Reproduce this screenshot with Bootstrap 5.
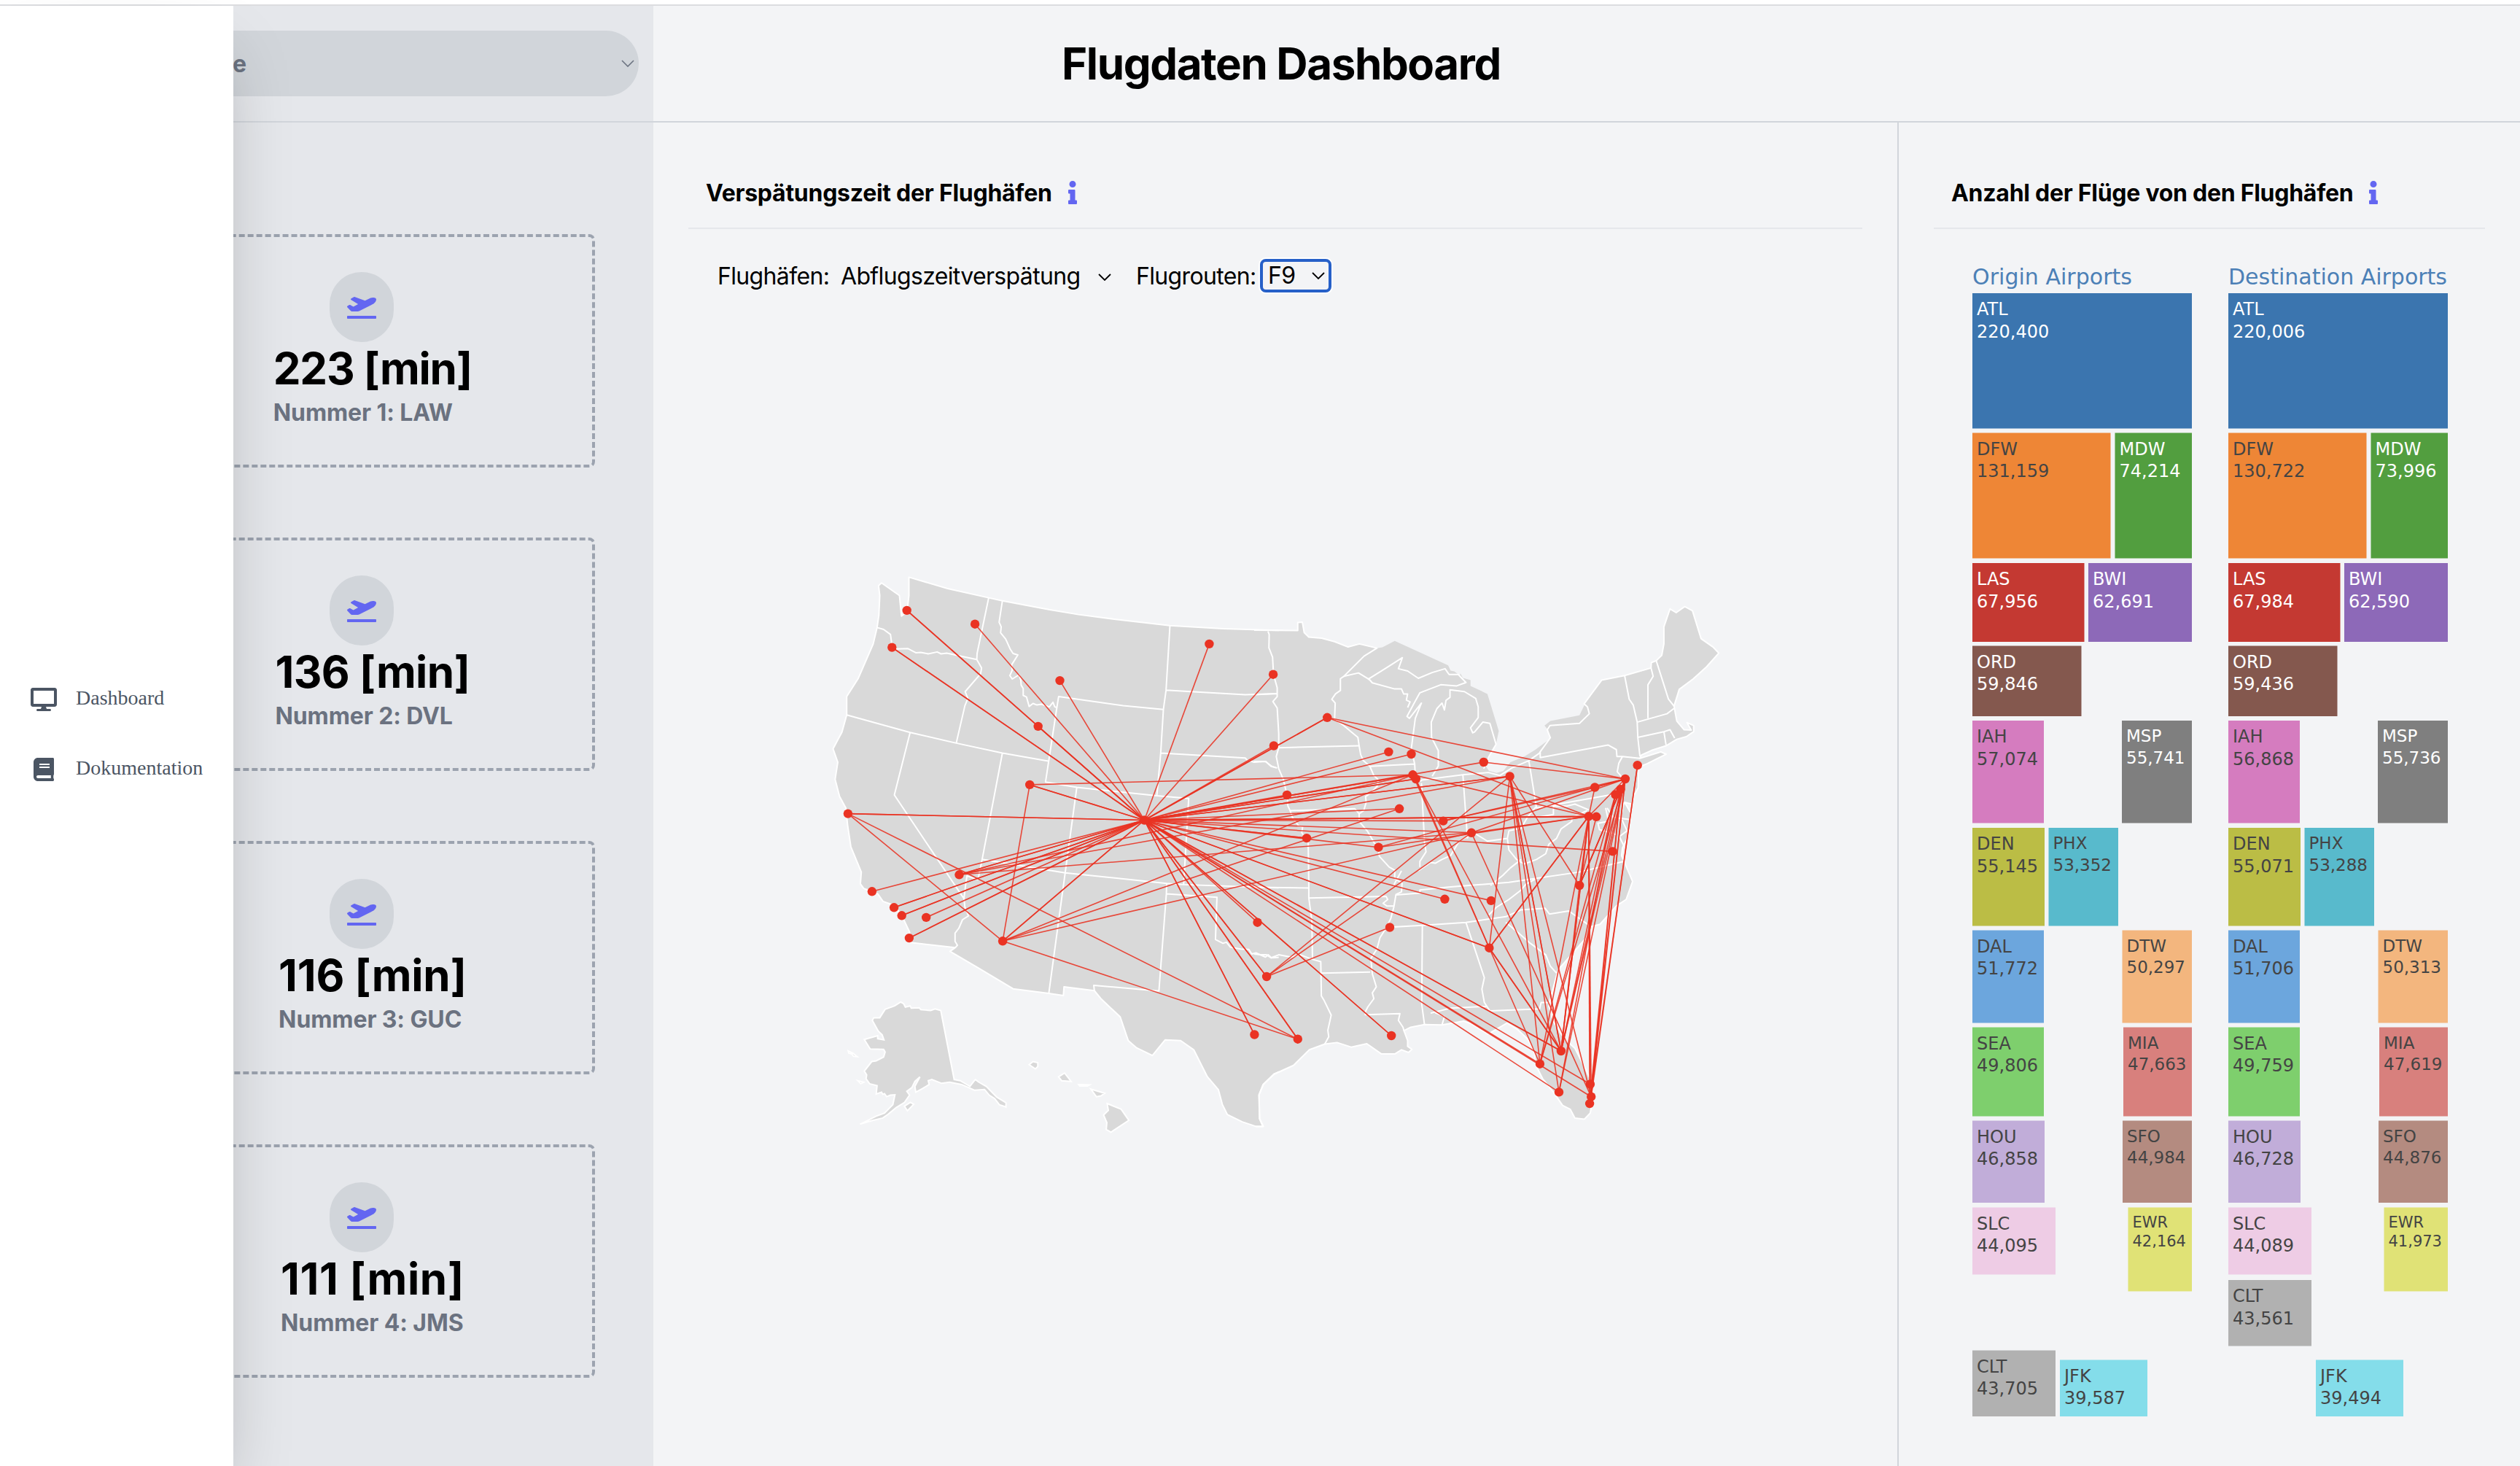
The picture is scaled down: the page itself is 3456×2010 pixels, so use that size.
<!DOCTYPE html>
<html lang="de">
<head>
<meta charset="utf-8">
<title>Flugdaten Dashboard</title>
<link href="https://cdn.jsdelivr.net/npm/bootstrap@5.3.0/dist/css/bootstrap.min.css" rel="stylesheet">
<style>
body{font-family:Inter,"Liberation Sans",sans-serif;font-size:32px;line-height:40px;color:#000;background:#fff;height:2010px;overflow:hidden}
.topline{height:8px;border-bottom:2px solid #dcdde0;flex:none}
.shell{background:#f3f4f6;height:2002px}
.side{width:896px;flex:none;background:#e5e7eb}
.bar{height:160px;border-bottom:2px solid #d1d5db;flex:none}
.pill{height:90px;width:800px;margin-right:20px;border-radius:45px;background:#d1d5da;color:#6b7280;padding:0 6px 0 243px}
.pill span{padding-top:2px}
.cards{gap:96px;padding:153px 0 0 176px}
.kpi{width:640px;height:320px;border:4px dashed #9ca3af;border-radius:8px;padding-top:48px;flex:none}
.disc{width:88px;height:96px;border-radius:44px;background:#d1d5da;color:#6366f1;flex:none}
.disc svg{margin-top:-1px}
.kpitext{margin-left:30px}
.big{font-size:60px;line-height:72px;letter-spacing:-1.2px}
.kpi:nth-child(2) .big{letter-spacing:-.6px}
.kpi:nth-child(3) .big{letter-spacing:-.2px}
.kpi:nth-child(4) .big{letter-spacing:.6px}
.sub{color:#6b7280;letter-spacing:-.1px;margin-top:5px}
.drawer{position:absolute;left:0;top:8px;width:320px;height:2002px;background:#fff;box-shadow:0 50px 100px -24px rgba(0,0,0,.27);font-family:"Liberation Serif",serif;font-size:28px;line-height:28px;color:#4b5563;padding:935px 0 0 42px;gap:64px}
.drawer .ico{width:36px;margin-right:26px}
.pagetitle{font-size:60px;line-height:72px;padding-left:560px;letter-spacing:-1.38px}
.mapcol{width:1708px;flex:none;padding:0 48px;border-right:2px solid #d1d5db}
.treecol{padding:0 48px}
.sect{height:146px;border-bottom:2px solid #e5e7eb;padding:76px 0 0 24px}
.sect svg{color:#6366f1;margin-left:22px}
.sect span{letter-spacing:-.27px;padding-top:1px}
.filters{height:106px;padding:45px 0 0 40px}
.filters span{white-space:nowrap;letter-spacing:-.65px}
.focused{width:98px;height:46px;border:4px solid #2660c8;border-radius:8px;box-shadow:0 0 0 2px #fff;padding:0 5px 0 7px}
.chart text{font-family:"DejaVu Sans",sans-serif}
</style>
</head>
<body class="d-flex flex-column">
<div class="topline"></div>
<div class="shell d-flex">
  <aside class="side d-flex flex-column">
    <div class="bar d-flex align-items-center justify-content-end">
      <div class="pill d-flex align-items-center justify-content-between fw-bold"><span>e</span>
        <svg width="18" height="10" fill="none" stroke="currentColor" stroke-width="1.6"><path d="M1 1l8 8 8-8"/></svg></div>
    </div>
    <div class="cards d-flex flex-column" id="cards"></div>
  </aside>
  <div class="flex-grow-1 d-flex flex-column">
    <header class="bar d-flex align-items-center"><h1 class="pagetitle fw-bold m-0">Flugdaten Dashboard</h1></header>
    <div class="d-flex flex-grow-1">
      <section class="mapcol">
        <div class="sect d-flex align-items-start fw-bold"><span>Verspätungszeit der Flughäfen</span>
          <svg class="mt-1" width="12" height="32" viewBox="0 0 192 512" overflow="visible"><use href="#info"/></svg></div>
        <div class="filters d-flex align-items-start">
          <span style="width:169px">Flughäfen:</span><span style="width:353px">Abflugszeitverspätung</span>
          <svg class="mt-3" width="18" height="10" fill="none" stroke="#000" stroke-width="1.8"><path d="M1 1l8 8 8-8"/></svg>
          <span style="width:170px;margin-left:34px">Flugrouten:</span>
          <div class="focused d-flex align-items-center justify-content-between" style="margin-top:-4px"><span>F9</span>
          <svg width="18" height="10" fill="none" stroke="#000" stroke-width="1.8"><path d="M1 1l8 8 8-8"/></svg></div>
        </div>
        <svg id="map" class="d-block" width="1610" height="1590" viewBox="944 420 1610 1590">
          <!-- western half -->
          <g transform="translate(1120 760) scale(.40816 .52295)">
            <path class="land" fill="#d9d9d9" d="M310,60 310,108 304,150 285,162 278,108 218,75 208,82 212,108 209,160 203,192 190,235 140,325 101,373 101,421 85,466 55,510 71,545 62,590 77,635 98,665 104,710 115,767 150,833 147,864 158,876 186,884 205,890 223,910 260,920 285,945 312,990 316,1018 466,1031 448,1041 540,1083 660,1139 780,1151 829,1157 831,1134 933,1144 955,1165 1020,1213 1047,1275 1075,1294 1128,1314 1171,1273 1223,1275 1267,1299 1313,1370 1350,1404 1363,1442 1380,1469 1430,1488 1476,1500 1499,1500 1488,1480 1486,1417 1500,1390 1536,1363 1568,1352 1568,200 1366,195 1187,187 1000,170 880,158 780,145 624,122 578,114 440,90Z"/>
            <g fill="none" stroke="#fff" stroke-width="2" stroke-linejoin="round">
            <path vector-effect="non-scaling-stroke" d="M1568,200 1366,195 1187,187 1000,170 880,158 780,145 624,122 578,114 440,90 310,60 310,108 304,150 285,162 278,108 218,75 208,82 212,108 209,160 203,192 190,235 140,325 101,373 101,421 85,466 55,510 71,545 62,590 77,635 98,665 104,710 115,767 150,833 147,864 158,876 186,884 205,890 223,910 260,920 285,945 312,990 316,1018 466,1031 448,1041 540,1083 660,1139 780,1151 829,1157 831,1134 933,1144 955,1165 1020,1213 1047,1275 1075,1294 1128,1314 1171,1273 1223,1275 1267,1299 1313,1370 1350,1404 1363,1442 1380,1469 1430,1488 1476,1500 1499,1500 1488,1480 1486,1417 1500,1390 1536,1363 1568,1352"/>
            <path vector-effect="non-scaling-stroke" d="M203,192 225,197 248,210 254,244 270,248 306,247 333,258 350,257 375,261 405,256 418,261 437,259 538,276M578,114 539,260 538,276 554,298 551,313 499,360 508,378 498,397 469,495M101,421 314,467 469,495 624,521 778,542M624,122 613,178 620,190 618,206 635,222 650,248 660,260 676,264 655,290 657,304 649,318 657,327 680,316 686,330 687,343 694,352 694,370 705,374 714,399 727,391 740,395 755,393 782,400 794,388 800,400 807,402M1165,407 1030,397 813,373 807,402 769,597 874,611 1143,633 1250,640 1233,866M1156,521 1440,534 1447,540 1470,545 1507,543 1530,556 1545,560M1187,187 1174,356 1165,407 1156,521 1143,633M1174,356 1300,362 1440,368 1546,365M874,611 835,835 780,1151M556,800 835,835 1176,863 1233,866 1568,875M624,521 556,800 542,853 505,843 500,870 495,903 498,925 510,948 490,958 478,980 465,993 465,1015 473,1025 466,1031M314,467 261,631 495,903M1176,863 1175,890 1150,1145 931,1130 933,1144M1175,890 1345,899 1340,1010 1365,1020 1377,1017 1390,1030 1425,1035 1452,1036 1462,1048 1476,1045 1508,1056 1517,1050 1528,1058 1568,1056"/>
            </g>
            <!-- Alaska and Hawaii -->
            <path vector-effect="non-scaling-stroke" fill="#d9d9d9" stroke="#fff" stroke-width="2" d="M282,1174 292,1178 298,1187 314,1184 318,1190 345,1189 350,1194 383,1196 398,1192 417,1196 462,1377 482,1380 515,1395 533,1377 545,1384 570,1395 605,1423 636,1438 636,1449 614,1443 598,1427 580,1418 564,1403 530,1405 487,1390 447,1384 420,1387 387,1377 375,1380 378,1390 355,1401 333,1410 330,1395 347,1370 330,1382 320,1398 303,1408 312,1418 295,1437 268,1450 240,1468 222,1478 185,1485 146,1494 200,1473 228,1465 256,1443 263,1417 248,1418 235,1422 228,1414 222,1416 218,1410 200,1415 203,1393 178,1388 166,1375 168,1365 160,1355 185,1330 200,1328 225,1318 230,1305 225,1298 180,1297 160,1272 205,1262 205,1270 226,1273 220,1260 207,1250 187,1222 192,1215 212,1215 230,1193 262,1184ZM106,1302 108,1308 118,1310 124,1316 136,1317 122,1308ZM138,1380 158,1384 148,1388ZM295,1447 315,1437 326,1442 305,1459ZM714,1338 727,1330 743,1333 743,1343 735,1349ZM813,1370 833,1360 855,1382 823,1380ZM880,1390 917,1391 910,1394 884,1394ZM921,1402 968,1413 955,1420 940,1422ZM976,1440 1023,1455 1049,1484 989,1515 973,1508 975,1490 964,1470 980,1458Z"/>
          </g>
          <!-- eastern half -->
          <g transform="translate(1720 760) scale(.42091 .52295)">
            <path fill="#d9d9d9" d="M80,200 142,200 142,179 157,178 163,205 178,217 220,220 262,229 306,243 343,235 400,246 418,244 458,227 540,257 632,291 640,305 652,307 670,318 672,312 680,324 705,330 705,345 760,366 797,463 788,498 765,530 750,550 765,568 790,573 812,568 835,545 880,530 915,513 957,488 965,480 957,460 946,449 965,437 1060,422 1078,392 1132,330 1207,318 1293,298 1294,284 1310,279 1328,265 1335,235 1335,190 1355,143 1375,153 1403,137 1428,148 1456,221 1495,243 1514,259 1474,295 1430,327 1385,354 1368,398 1377,437 1401,460 1424,461 1410,441 1432,449 1432,465 1408,478 1377,485 1342,502 1295,514 1262,526 1257,535 1325,518 1342,524 1280,549 1252,558 1251,612 1239,630 1230,655 1207,650 1228,680 1218,740 1200,770 1197,790 1205,805 1233,858 1212,905 1180,922 1127,970 1097,976 1083,1004 990,1090 965,1165 960,1185 975,1225 1010,1270 1045,1295 1080,1350 1100,1385 1104,1425 1095,1465 1076,1481 1045,1478 1030,1455 1005,1445 975,1410 940,1375 918,1340 912,1300 890,1270 857,1245 824,1229 762,1258 705,1230 683,1224 612,1234 555,1233 510,1240 488,1249 500,1275 500,1290 514,1298 503,1306 480,1299 458,1310 415,1310 367,1283 316,1292 270,1280 230,1284 180,1299 128,1340 80,1358Z"/>
            <g fill="none" stroke="#fff" stroke-width="2" stroke-linejoin="round">
            <path vector-effect="non-scaling-stroke" d="M0,199 142,200 142,179 157,178 163,205 178,217 220,220 262,229 306,243 343,235 400,246 358,267 292,320 281,326 281,357 265,366 253,380 264,390 262,432 290,448 320,468 338,480 342,502 347,525 355,540 377,556 390,580 403,590 402,607 380,625 363,635 365,650 357,672 342,680 342,700 370,727 390,755 405,770 408,792 440,820 458,828 458,850 482,862 480,885 462,892 455,925 445,955 430,980 410,1005 400,1035 380,1060 385,1100 398,1134 385,1150 390,1165 370,1187 362,1200 362,1207 475,1204 470,1222 485,1240 488,1249"/>
            <path vector-effect="non-scaling-stroke" d="M930,520 965,481 955,460 964,449 1060,443 1092,418 1086,400 1075,392 1132,330 1207,318 1293,298 1294,284 1310,279 1328,265 1335,235 1335,190 1355,143 1375,153 1403,137 1428,148 1456,221 1495,243 1514,259 1474,295 1430,327 1385,354 1368,398 1377,437 1401,460 1424,461 1410,441 1432,449 1432,465 1408,478 1377,485 1342,502 1295,514 1262,526 1257,535 1325,518 1342,524 1280,549 1252,558 1251,612 1239,630 1230,655 1207,650 1228,680 1218,740 1200,770 1197,790 1205,805 1233,858 1212,905 1180,922 1127,970 1097,976 1083,1004 990,1090 965,1165 960,1185 975,1225 1010,1270 1045,1295 1080,1350 1100,1385 1104,1425 1095,1465 1076,1481 1045,1478 1030,1455 1005,1445 975,1410 940,1375 918,1340 912,1300 890,1270 857,1245 824,1229 762,1258 705,1230 683,1224 612,1234 555,1233 510,1240 488,1249 500,1275 500,1290 514,1298 503,1306 480,1299 458,1310 415,1310 367,1283 316,1292 270,1280 230,1284 180,1299 128,1340 65,1363 30,1390 16,1417 18,1480 30,1500 5,1500"/>
            <path vector-effect="non-scaling-stroke" d="M45,202 49,210 48,245 60,270 63,315 75,350 75,373 61,386 75,403 80,470 80,507 72,530 80,562 95,590 107,631 110,660 117,672 125,690 145,712 158,715 155,730 176,752 178,875 178,901 188,960 190,1062 217,1068 219,1158 228,1170 251,1208 240,1248 243,1265 230,1284M80,507 342,502M0,543 38,543 55,556 75,560M0,368 75,365M117,672 328,667 342,680M377,556 523,550M292,320 340,311 375,328 385,337 458,353 480,353 487,366 500,366 496,382 508,387 500,402M370,328 430,298 483,271 470,300 500,306 535,325 580,310 622,300 635,315 665,315 690,336 660,345 608,342 540,363 520,392 498,425 506,430 545,390 525,430 512,510 523,550 525,580 545,595M545,600 555,755 560,780 540,805 540,820M545,592 680,578 763,572 800,580 840,560 895,541 932,520 932,533 1153,500 1180,512 1182,530 1200,530M580,582 600,555 600,515 578,480 577,440 595,405 612,390 620,408 625,383 638,375 638,355 685,360 722,378 730,400 730,428 705,455 712,468 718,466 745,440 768,443 788,498 765,530 748,562M680,578 695,745M895,541 920,665 1165,630M1257,535 1200,530 1188,548 1183,570 1205,590 1175,630M1207,318 1222,380 1235,395 1248,440 1250,480 1257,530M1293,298 1300,320 1283,342 1283,430M1310,279 1350,380 1368,398M1248,440 1345,418 1368,404M1250,480 1335,465 1355,460 1370,482M1335,465 1342,500M453,870 480,830M535,830 575,808 590,810 612,800 640,790 668,752 695,740 720,732 760,752 825,745 830,725 870,718 890,690 920,660M825,745 830,775 855,800 880,812 920,800 950,785 960,760 985,745 1000,720 1035,700 1035,690 1085,672M920,690 975,682 975,660 1020,660 1045,655 1090,670M462,893 540,888 540,880 640,872 830,860 1060,833 1205,805M770,868 810,842 835,822 870,800M430,978 548,973 690,965 820,950 870,932 948,928 962,943 1025,935 1097,976M765,945 790,925 830,905 870,880 885,865 920,850M820,965 850,985 900,1020 950,1050 965,1080 985,1098M690,965 750,1110 742,1140 750,1175 768,1197 930,1192 935,1175 965,1175M575,1203 640,1190 757,1185M612,1234 620,1212 590,1202M548,973 546,1180 555,1233M219,1098 378,1095M178,901 430,897 435,905 420,915 432,922 455,922M0,873 178,875M0,1048 20,1050 40,1050 55,1058 80,1050 120,1056 150,1050 190,1062M1145,665 1155,700 1120,705 1125,722 1180,735M1150,665 1170,690 1222,695M1205,650 1195,690 1215,725 1190,740 1205,765"/>
            </g>
          </g>
        </svg>
      </section>
      <section class="treecol">
        <div class="sect d-flex align-items-start fw-bold" style="width:756px"><span>Anzahl der Flüge von den Flughäfen</span>
          <svg class="mt-1" width="12" height="32" viewBox="0 0 192 512" overflow="visible"><use href="#info"/></svg></div>
        <svg id="tree" class="chart d-block" width="756" height="1690" viewBox="2652 314 756 1690"></svg>
      </section>
    </div>
  </div>
</div>
<nav class="drawer d-flex flex-column">
  <div class="d-flex"><span class="ico d-flex"><svg width="36" height="32" viewBox="0 0 576 512" fill="currentColor"><path d="M528 0H48C21.5 0 0 21.5 0 48v320c0 26.500 21.500 48 48 48h192l-16 48h-72c-13.300 0-24 10.700-24 24s10.700 24 24 24h272c13.300 0 24-10.700 24-24s-10.700-24-24-24h-72l-16-48h192c26.500 0 48-21.500 48-48V48c0-26.500-21.500-48-48-48zm-16 352H64V64h448v288z"/></svg></span>Dashboard</div>
  <div class="d-flex"><span class="ico d-flex justify-content-center"><svg width="28" height="32" viewBox="0 0 448 512" fill="currentColor"><path d="M448 360V24c0-13.300-10.700-24-24-24H96C43 0 0 43 0 96v320c0 53 43 96 96 96h328c13.300 0 24-10.700 24-24v-16c0-7.500-3.500-14.300-8.900-18.700-4.200-15.400-4.200-59.300 0-74.700 5.400-4.300 8.900-11.100 8.900-18.600zM128 134c0-3.300 2.700-6 6-6h212c3.300 0 6 2.700 6 6v20c0 3.300-2.700 6-6 6H134c-3.300 0-6-2.700-6-6v-20zm0 64c0-3.300 2.700-6 6-6h212c3.300 0 6 2.700 6 6v20c0 3.300-2.700 6-6 6H134c-3.300 0-6-2.700-6-6v-20zm253.400 250H96c-17.700 0-32-14.300-32-32 0-17.600 14.400-32 32-32h285.400c-1.900 17.100-1.900 46.900 0 64z"/></svg></span>Dokumentation</div>
</nav>
<svg width="0" height="0" style="position:absolute"><defs>
<path id="info" fill="currentColor" d="M20 424.229h20V279.771H20c-11.046 0-20-8.954-20-20V212c0-11.046 8.954-20 20-20h112c11.046 0 20 8.954 20 20v212.229h20c11.046 0 20 8.954 20 20V492c0 11.046-8.954 20-20 20H20c-11.046 0-20-8.954-20-20v-47.771c0-11.046 8.954-20 20-20zM96 0C56.235 0 24 32.235 24 72s32.235 72 72 72 72-32.235 72-72S135.764 0 96 0z"/>
<path id="plane" fill="currentColor" d="M624 448H16c-8.840 0-16 7.160-16 16v32c0 8.840 7.160 16 16 16h608c8.840 0 16-7.160 16-16v-32c0-8.840-7.160-16-16-16zM80.550 341.270c6.280 6.840 15.100 10.720 24.330 10.710l130.540-.180a65.620 65.620 0 0 0 29.640-7.120l290.960-147.650c26.740-13.570 50.710-32.940 67.020-58.310 18.310-28.480 20.300-49.090 13.070-63.650-7.210-14.570-24.740-25.270-58.250-27.450-29.850-1.940-59.540 5.920-86.280 19.480l-98.510 49.990-218.700-82.060a17.799 17.799 0 0 0-18-1.110L90.620 67.290c-10.670 5.410-13.250 19.650-5.170 28.530l156.220 98.100-103.210 52.380-72.350-36.470a17.804 17.804 0 0 0-16.070.020L9.910 230.220c-10.440 5.300-13.190 19.120-5.570 28.080l76.210 82.970z"/>
</defs></svg>
<script src="https://cdn.jsdelivr.net/npm/bootstrap@5.3.0/dist/js/bootstrap.bundle.min.js"></script>
<script>
document.getElementById('cards').innerHTML=[['223','LAW'],['136','DVL'],['116','GUC'],['111','JMS']].map((c,i)=>
`<div class="kpi d-flex flex-column align-items-center"><div class="disc d-flex align-items-center justify-content-center"><svg width="40" height="32" viewBox="0 0 640 512"><use href="#plane"/></svg></div>
<div class="kpitext fw-bold"><div class="big">${c[0]} [min]</div><div class="sub">Nummer ${i+1}: ${c[1]}</div></div></div>`).join('');

const A={SEA:[1243.7,836.9],GEG:[1337.1,855.7],PDX:[1223.3,887.6],BZN:[1453.5,933.1],BIS:[1658.4,882.9],FAR:[1746.1,924.7],FSD:[1746.9,1022.5],JAC:[1423.7,995.9],SLC:[1412.2,1075.9],SFO:[1162.9,1115.6],DEN:[1569.4,1124.5],LAS:[1315.5,1199.3],SBA:[1195.9,1222.3],LAX:[1226.1,1244.3],SNA:[1236.7,1255.3],PSP:[1270.2,1257.9],SAN:[1246.9,1286.1],PHX:[1375.1,1290.3],OKC:[1724.5,1264.7],DFW:[1737.1,1339],SAT:[1720.4,1418.5],IAH:[1779.8,1424.7],MSP:[1820.2,983.8],OMA:[1765,1090],MCI:[1792,1149.1],MSN:[1904.4,1030.9],MKE:[1935.5,1034],ORD:[1937.6,1062.3],MDW:[1941.8,1068],DTW:[2034.8,1045],CLE:[2070.6,1064.4],BMI:[1919.1,1108.8],IND:[1979.3,1125.6],STL:[1890.5,1161.7],CVG:[2018,1141.8],BNA:[1981.4,1232.8],TYS:[2044.9,1234.9],MEM:[1906,1271.5],ATL:[2042.4,1299.7],MSY:[1908.2,1420],MDT:[2187.2,1079.5],LGA:[2245.7,1049.2],TTN:[2228.9,1068],PHL:[2222.6,1082.2],ILG:[2215.4,1089.5],IAD:[2178.8,1119.3],DCA:[2189.3,1119.8],ORF:[2211.6,1167.4],RDU:[2166.2,1214],MCO:[2140.9,1441],TPA:[2111.9,1458.7],RSW:[2138,1497.4],PBI:[2180.9,1486.5],FLL:[2182.2,1503.7],MIA:[2180.1,1513.1]};
const routes={
DEN:'SEA SEA GEG PDX PDX BZN BIS FAR FSD MSP MSP JAC SLC SLC SFO SFO LAS LAS SBA LAX LAX SNA SNA PSP SAN SAN PHX PHX OKC DFW DFW SAT SAT IAH IAH OMA MCI MCI MSN MKE ORD ORD MDW MDW DTW CLE CLE BMI IND STL CVG BNA TYS ATL ATL MSY MSY IAD IAD DCA ORF MCO MCO TPA RSW FLL PBI',
SLC:'ORD PHX',SFO:'PHX IAH',PHX:'IAH ORD BMI CVG',LAS:'CVG CLE ORD',DFW:'CLE CVG MEM',
MSP:'IAD TTN',DTW:'TTN',ORD:'IAD ATL MCO',MDW:'ATL',ATL:'MCO TPA IAD IAD MCO CLE',
CLE:'RDU TPA MCO MCO RSW FLL',CVG:'FLL IAD TTN',STL:'TTN IAD',IND:'TTN MDT',MDT:'IAD TTN',
TTN:'IAD RDU MCO TPA FLL RSW MIA',RDU:'MCO TTN',ILG:'MCO TPA RSW',PHL:'MCO MIA FLL RDU',
IAD:'TPA MCO MCO FLL MIA PBI RDU',DCA:'RDU',LGA:'FLL MIA'};
let s='<g stroke="#ea3323" stroke-width="1.600">';
for(const f in routes)for(const t of routes[f].split(' '))s+=`<path d="M${A[f]}L${A[t]}" opacity=".88"/>`;
s+='</g><g fill="#ea3323">';
for(const k in A)s+=`<circle cx="${A[k][0]}" cy="${A[k][1]}" r="6.200"/>`;
document.getElementById('map').insertAdjacentHTML('beforeend',s+'</g>');

// code, origin, destination, x, y, right, bottom, colour, text colour, text size
const T=[['ATL','220,400','220,006',2705,402,3006,587.5,'#3b75af','#fff',24],['DFW','131,159','130,722',2705,593.5,2894.500,765.5,'#ee8636','#444',24],['MDW','74,214','73,996',2900.500,593.5,3006,765.5,'#529e3f','#fff',24],['LAS','67,956','67,984',2705,772,2858.5,880,'#c43932','#fff',24],['BWI','62,691','62,590',2864,772,3006,880,'#8d69b8','#fff',24],['ORD','59,846','59,436',2705,885.5,2854.500,982,'#84584e','#fff',24],['IAH','57,074','56,868',2705,988,2803,1128.500,'#d57cbf','#444',24],['MSP','55,741','55,736',2910,988,3006,1128.500,'#7f7f7f','#fff',23],['DEN','55,145','55,071',2705,1135,2804,1269.5,'#bbbd45','#444',24],['PHX','53,352','53,288',2809.5,1135,2905,1269.5,'#58bacc','#444',23],['DAL','51,772','51,706',2705,1275.5,2803,1402.500,'#6ca6dd','#444',24],['DTW','50,297','50,313',2910.500,1275.5,3006,1402.500,'#f3b67e','#444',23],['SEA','49,806','49,759',2705,1408.5,2803,1530.500,'#7ecf6d','#444',24],['MIA','47,663','47,619',2912,1408.5,3006,1530.500,'#d8807d','#444',23],['HOU','46,858','46,728',2705,1536.5,2804,1649,'#c1add9','#444',24],['SFO','44,984','44,876',2911,1536.5,3006,1649,'#b48b80','#444',23],['SLC','44,095','44,089',2705,1655.5,2819,1747.500,'#eecce5','#444',24],['EWR','42,164','41,973',2918.500,1655.5,3006,1770.500,'#e0e276','#444',21],['CLT','43,705','43,561',2705,1851.5,2819,1942,'#b1b1b1','#444',24],['JFK','39,587','39,494',2825,1864.5,2945,1942,'#84ddea','#444',24]];
let o='';
[0,1].forEach(d=>{const dx=d*351;
 o+=`<text x="${2705+dx}" y="390" font-size="30" textLength="${d?300:219}" fill="#4c80b6">${d?'Destination':'Origin'} Airports</text>`;
 T.forEach(r=>{let [n,a,b,x,y,x2,y2,c,f,z]=r;if(d&&n=='CLT'){y-=96.500;y2-=96.500}
 o+=`<rect x="${x+dx}" y="${y}" width="${x2-x}" height="${y2-y}" fill="${c}"/><text x="${x+dx+6}" y="${y+6+z}" font-size="${z}" fill="${f}">${n}</text><text x="${x+dx+6}" y="${y+6.300+z*2.270}" font-size="${z}" fill="${f}">${d?b:a}</text>`})});
document.getElementById('tree').innerHTML=o;
</script>
</body>
</html>
